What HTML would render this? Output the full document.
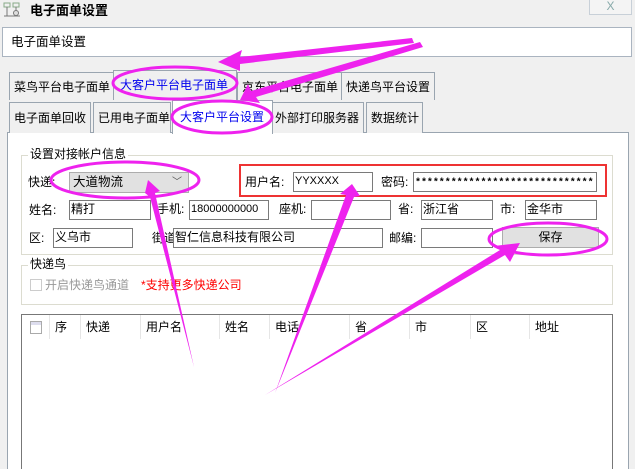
<!DOCTYPE html>
<html><head><meta charset="utf-8"><style>
*{margin:0;padding:0;box-sizing:border-box}
html,body{width:635px;height:469px;overflow:hidden}
body{background:#f0f0f0;position:relative;font-family:"Liberation Sans","Noto Sans CJK SC",sans-serif;font-size:12px;color:#000}
.a{position:absolute;white-space:nowrap}
.tab{position:absolute;border:1px solid #9aa5b0;border-bottom:none;background:#f0f0f0;padding-left:4px;line-height:28px;font-size:12px}
.in{position:absolute;background:#fff;border:1px solid #7a7a7a;line-height:17px;padding-left:1px;font-size:12px;overflow:hidden}
.lb{position:absolute;font-size:12px;white-space:nowrap;line-height:17px}
.grp{position:absolute;border:1px solid #dcdcd0}
.col{position:absolute;top:315px;height:24px;border-left:1px solid #e6e6e6;line-height:24px;padding-left:5px}
</style></head><body>
<div class="a" style="left:3px;top:2px;width:18px;height:16px">
<svg width="18" height="16"><rect x="1" y="1" width="6" height="4" fill="none" stroke="#8a8" /><rect x="10" y="1" width="6" height="4" fill="none" stroke="#8a8"/><line x1="4" y1="5" x2="4" y2="14" stroke="#777"/><line x1="13" y1="5" x2="13" y2="14" stroke="#777"/><circle cx="13" cy="11" r="2.5" fill="#ddd" stroke="#777"/><line x1="1" y1="14" x2="17" y2="14" stroke="#777"/></svg></div>
<div class="a" style="left:30px;top:1px;font-size:13px;font-weight:bold;line-height:20px">电子面单设置</div>
<div class="a" style="left:589px;top:-1px;width:43px;height:16px;border:1px solid #c8d0d8;background:#f4f4f4;color:#8aa;text-align:center;line-height:13px;font-size:12px">X</div>
<div class="a" style="left:2px;top:27px;width:630px;height:30px;background:#fff;border:1px solid #aab4c0;padding-left:8px;line-height:28px;font-size:12.5px">电子面单设置</div>
<div class="a" style="left:7px;top:132px;width:622px;height:337px;background:#fff;border:1px solid #9aa5b0;border-bottom:none"></div>
<div class="tab" style="left:9px;top:72px;width:105px;height:28px">菜鸟平台电子面单</div>
<div class="tab" style="left:237px;top:72px;width:105px;height:28px">京东平台电子面单</div>
<div class="tab" style="left:341px;top:72px;width:94px;height:28px">快递鸟平台设置</div>
<div class="tab" style="left:113px;top:70px;width:124px;height:30px;color:#0000ee;padding-left:6px">大客户平台电子面单</div>
<div class="tab" style="left:9px;top:102px;width:82px;height:31px;line-height:30px">电子面单回收</div>
<div class="tab" style="left:93px;top:102px;width:78px;height:31px;line-height:30px">已用电子面单</div>
<div class="tab" style="left:272px;top:102px;width:92px;height:31px;line-height:30px;padding-left:2px">外部打印服务器</div>
<div class="tab" style="left:366px;top:102px;width:57px;height:31px;line-height:30px">数据统计</div>
<div class="tab" style="left:172px;top:100px;width:101px;height:34px;line-height:32px;color:#0000ee;background:#fff;padding-left:7px">大客户平台设置</div>
<div class="grp" style="left:21px;top:155px;width:592px;height:100px"></div>
<div class="lb" style="left:28px;top:146px;background:#fff;padding:0 2px">设置对接帐户信息</div>
<div class="lb" style="left:28px;top:174px">快递:</div>
<div class="a" style="left:69px;top:172px;width:120px;height:21px;background:#e1e1e1;border:1px solid #adadad;line-height:19px;padding-left:3px;font-size:12.5px">大道物流<span style="position:absolute;right:6px;top:0;color:#555;font-size:10px">﹀</span></div>
<div class="a" style="left:239px;top:164px;width:368px;height:33px;border:2px solid #ee3333"></div>
<div class="lb" style="left:245px;top:174px">用户名:</div>
<div class="in" style="left:293px;top:172px;width:80px;height:20px;font-size:11px">YYXXXX</div>
<div class="lb" style="left:381px;top:174px">密码:</div>
<div class="in" style="left:413px;top:172px;width:184px;height:20px;font-family:'Liberation Mono',monospace;font-size:10px;letter-spacing:-0.05px;line-height:22px;font-weight:bold">******************************</div>
<div class="lb" style="left:29px;top:202px">姓名:</div>
<div class="in" style="left:69px;top:200px;width:82px;height:20px">精打</div>
<div class="lb" style="left:157px;top:201px">手机:</div>
<div class="in" style="left:189px;top:200px;width:80px;height:20px;font-size:11px">18000000000</div>
<div class="lb" style="left:279px;top:201px">座机:</div>
<div class="in" style="left:311px;top:200px;width:80px;height:20px"></div>
<div class="lb" style="left:398px;top:201px">省:</div>
<div class="in" style="left:421px;top:200px;width:72px;height:20px">浙江省</div>
<div class="lb" style="left:500px;top:201px">市:</div>
<div class="in" style="left:525px;top:200px;width:72px;height:20px">金华市</div>
<div class="lb" style="left:29px;top:230px">区:</div>
<div class="in" style="left:53px;top:228px;width:80px;height:20px">义乌市</div>
<div class="lb" style="left:152px;top:230px">街道:</div>
<div class="in" style="left:173px;top:228px;width:210px;height:20px">智仁信息科技有限公司</div>
<div class="lb" style="left:389px;top:230px">邮编:</div>
<div class="in" style="left:421px;top:228px;width:72px;height:20px"></div>
<div class="a" style="left:502px;top:227px;width:97px;height:21px;background:#e1e1e1;border:1px solid #adadad;text-align:center;line-height:19px">保存</div>
<div class="grp" style="left:21px;top:265px;width:592px;height:40px"></div>
<div class="lb" style="left:28px;top:256px;background:#fff;padding:0 2px">快递鸟</div>
<div class="a" style="left:30px;top:279px;width:12px;height:12px;border:1px solid #ccc;background:#fff"></div>
<div class="lb" style="left:45px;top:277px;color:#999">开启快递鸟通道</div>
<div class="lb" style="left:141px;top:277px;color:#f00">*支持更多快递公司</div>
<div class="a" style="left:21px;top:314px;width:592px;height:155px;border:1px solid #777;border-bottom:none;background:#fff"></div>
<div class="a" style="left:30px;top:321px;width:12px;height:13px;border:1px solid #aaa;background:linear-gradient(#dde 0 3px,#fff 3px)"></div>
<div class="col" style="left:49px">序</div>
<div class="col" style="left:80px">快递</div>
<div class="col" style="left:140px">用户名</div>
<div class="col" style="left:219px">姓名</div>
<div class="col" style="left:269px">电话</div>
<div class="col" style="left:349px">省</div>
<div class="col" style="left:409px">市</div>
<div class="col" style="left:470px">区</div>
<div class="col" style="left:529px">地址</div>
<svg class="a" style="left:0;top:0" width="635" height="469">
<g fill="none" stroke="#ee22ee" stroke-width="3">
<ellipse cx="175" cy="83" rx="62" ry="16"/>
<ellipse cx="222" cy="117" rx="50" ry="16"/>
<ellipse cx="125" cy="180" rx="74" ry="18"/>
<ellipse cx="548" cy="239" rx="59" ry="16"/>
</g>
<g fill="#ee22ee">
<polygon points="218,62 242,50 240,57 412,38 414,43 240,64 240,71"/>
<polygon points="240,100 248,84 251,91 420,42 423,47 256,97 260,103"/>
<polygon points="145,193 148,180 160,191 155,193 194,367 150,197"/>
<polygon points="352,184 360,196 354,197 275,393 346,195 340,194"/>
<polygon points="520,243 510,262 505,255 265,395 500,250 494,246"/>
</g>
</svg>
</body></html>
